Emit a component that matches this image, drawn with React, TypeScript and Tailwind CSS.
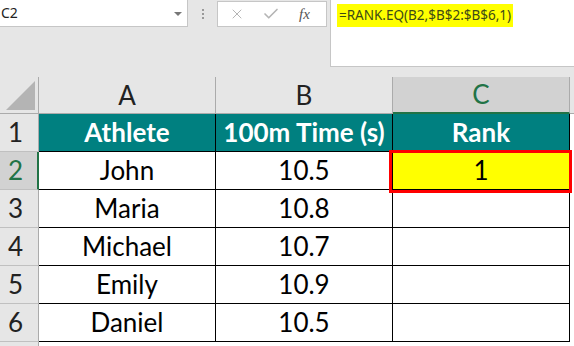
import { X, Check } from "lucide-react";

const data = [
    { name: "John", time: "10.5", rank: "1" },
    { name: "Maria", time: "10.8", rank: "" },
    { name: "Michael", time: "10.7", rank: "" },
    { name: "Emily", time: "10.9", rank: "" },
    { name: "Daniel", time: "10.5", rank: "" },
];

const cellFont = { fontFamily: "Lato, 'Open Sans', sans-serif" };

function FormulaBar() {
    return (
        <div className="flex items-start h-[77px] bg-[#e6e6e6]" style={{ fontFamily: "'Noto Sans', 'Open Sans', sans-serif" }}>
            {/* name box */}
            <div className="flex items-center justify-between w-[188px] h-[27px] bg-white border border-t-0 border-l-0 border-[#c6c6c6] pl-[1px] pr-[5px]">
                <span className="text-[14px] text-[#222] leading-none">C2</span>
                <span className="w-0 h-0 border-l-[4px] border-r-[4px] border-t-[4px] border-l-transparent border-r-transparent border-t-[#777] mt-[1px]" />
            </div>
            <div className="flex flex-col gap-[2px] ml-[14px] mt-[9px]">
                <span className="w-[2px] h-[2px] bg-[#999]" />
                <span className="w-[2px] h-[2px] bg-[#999]" />
                <span className="w-[2px] h-[2px] bg-[#999]" />
            </div>
            {/* buttons */}
            <div className="flex items-center w-[110px] h-[26px] mt-[1px] ml-[13px] bg-white border border-[#c6c6c6]">
                <X className="w-[16px] h-[16px] ml-[11px] text-[#b5b5b5]" strokeWidth={1.5} />
                <Check className="w-[18px] h-[18px] ml-[17px] text-[#b5b5b5]" strokeWidth={2.2} />
                <span className="ml-[19px] text-[15px] italic text-[#555] leading-none" style={{ fontFamily: "'Liberation Serif', serif" }}>fx</span>
            </div>
            {/* formula */}
            <div className="flex-1 h-[67px] ml-[3px] bg-white border border-t-0 border-r-0 border-[#c6c6c6] pl-[6px] pt-[2px]">
                <span className="inline-block bg-[#ffff00] h-[23px] w-[176px] pl-[2px] text-[13.5px] leading-[23px] text-[#3d4a16] whitespace-nowrap">
                    =RANK.EQ(B2,$B$2:$B$6,1)
                </span>
            </div>
        </div>
    );
}

function ColumnHeader() {
    return (
        <div className="flex h-[37px]" style={cellFont}>
            <div className="relative w-[39px] h-full bg-[#e6e6e6] border-r border-b border-[#ababab]">
                <svg className="absolute left-0 top-0" width="38" height="36" viewBox="0 0 38 36">
                    <polygon points="6,33 35,33 35,4" fill="#b4b4b4" />
                </svg>
            </div>
            <div className="w-[177px] flex items-center justify-center bg-[#e6e6e6] border-r border-b border-[#ababab] text-[26px] text-[#222]">A</div>
            <div className="w-[177px] flex items-center justify-center bg-[#e6e6e6] border-r border-b border-[#ababab] text-[26px] text-[#222]">B</div>
            <div className="w-[177px] flex items-center justify-center bg-[#d2d2d2] border-r border-[#ababab] border-b-2 border-b-[#217346] text-[26px] text-[#217346]">C</div>
            <div className="flex-1 bg-[#e6e6e6] border-b border-[#ababab]" />
        </div>
    );
}

function RowHead({ n, active }: { n: number; active?: boolean }) {
    return (
        <div
            className={
                active
                    ? "w-[39px] flex items-center pl-[8px] bg-[#d2d2d2] border-r-2 border-r-[#217346] border-b border-b-[#c0c0c0] text-[26px] text-[#217346]"
                    : "w-[39px] flex items-center pl-[8px] bg-[#e6e6e6] border-r border-r-[#ababab] border-b border-b-[#c0c0c0] text-[26px] text-[#222]"
            }
        >
            {n}
        </div>
    );
}

export default function App() {
    return (
        <div className="w-[574px] h-[346px] overflow-hidden bg-white">
            <FormulaBar />
            <ColumnHeader />
            <div style={cellFont}>
                <div className="flex h-[38px]">
                    <RowHead n={1} />
                    <div className="w-[177px] flex items-center justify-center bg-[#008080] border-r border-b border-black text-[26px] font-bold text-white">Athlete</div>
                    <div className="w-[177px] flex items-center justify-center bg-[#008080] border-r border-b border-black text-[26px] font-bold text-white">100m Time (s)</div>
                    <div className="w-[177px] flex items-center justify-center bg-[#008080] border-r border-b border-black text-[26px] font-bold text-white">Rank</div>
                </div>
                {data.map((r, i) => (
                    <div key={r.name} className="flex h-[38px]">
                        <RowHead n={i + 2} active={i === 0} />
                        <div className="w-[177px] flex items-center justify-center border-r border-b border-black text-[26px] text-black">{r.name}</div>
                        <div className="w-[177px] flex items-center justify-center border-r border-b border-black text-[26px] text-black">{r.time}</div>
                        <div className={i === 0 ? "relative w-[177px] flex items-center justify-center bg-[#ffff00] border-r border-b border-black text-[26px] text-black" : "w-[177px] flex items-center justify-center border-r border-b border-black text-[26px] text-black"}>
                            {r.rank}
                            {i === 0 && <div className="absolute -left-[4px] -top-[2px] -right-[3px] -bottom-[4px] border-[3px] border-[#ff0000]" />}
                        </div>
                    </div>
                ))}
                <div className="flex h-[10px]">
                    <div className="w-[39px] bg-[#e6e6e6] border-r border-[#ababab]" />
                </div>
            </div>
        </div>
    );
}
